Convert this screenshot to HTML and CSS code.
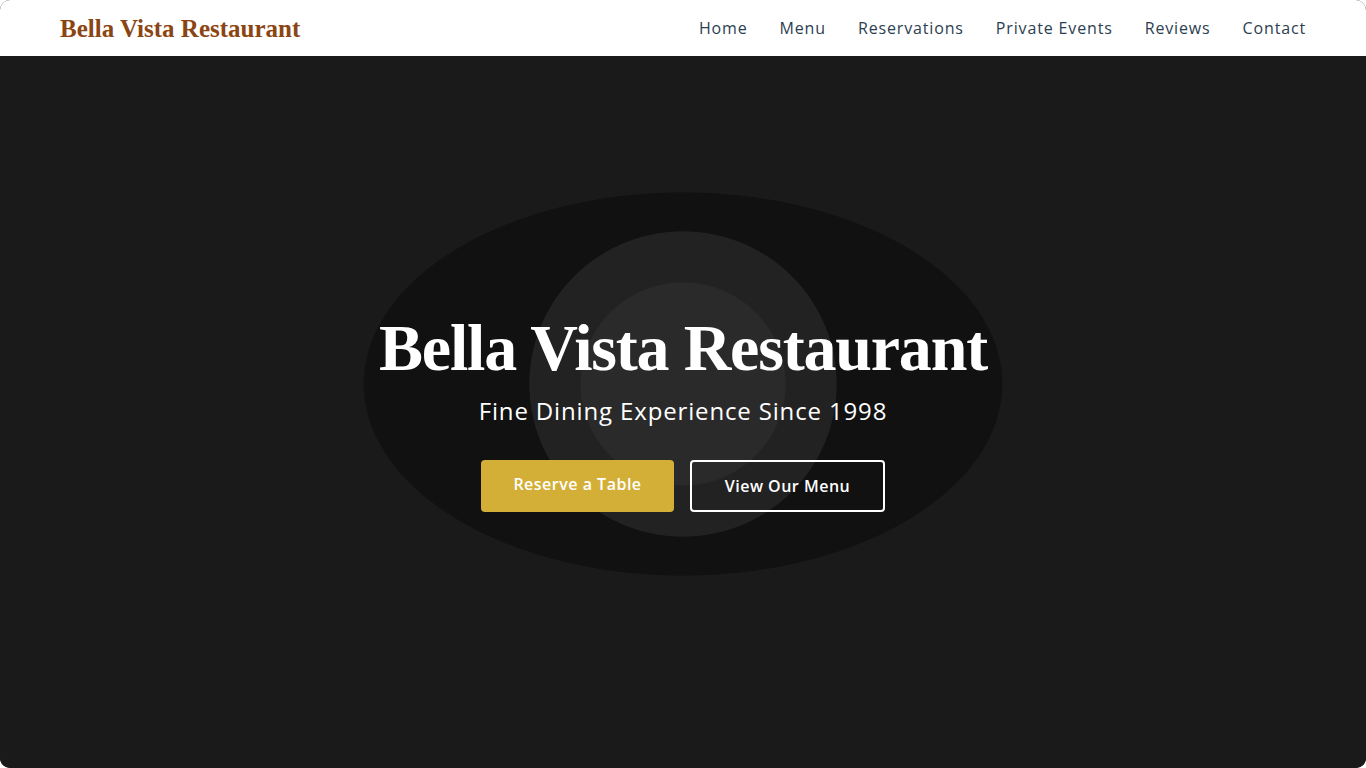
FILE: index.html
```html
<!DOCTYPE html>
<html lang="en">
<head>
<meta charset="utf-8">
<title>Bella Vista Restaurant</title>
<link rel="stylesheet" href="styles.css">
</head>
<body>
<div class="page">
  <header class="navbar">
    <a class="logo" href="#">Bella Vista Restaurant</a>
    <nav class="nav-links">
      <a href="#">Home</a>
      <a href="#">Menu</a>
      <a href="#">Reservations</a>
      <a href="#">Private Events</a>
      <a href="#">Reviews</a>
      <a href="#">Contact</a>
    </nav>
  </header>
  <section class="hero">
    <div class="hero-content">
      <h1 class="hero-title">Bella Vista Restaurant</h1>
      <p class="hero-subtitle">Fine Dining Experience Since 1998</p>
      <div class="hero-actions">
        <a class="btn btn-primary" href="#">Reserve a Table</a>
        <a class="btn btn-outline" href="#">View Our Menu</a>
      </div>
    </div>
  </section>
</div>
</body>
</html>
```
FILE: styles.css
```css
* { box-sizing: border-box; }
html, body { margin: 0; padding: 0; background: #ffffff; }
body { font-family: "Open Sans", "Noto Sans", sans-serif; }

.page {
  height: 768px;
  border-radius: 10px;
  overflow: hidden;
  background: #1a1a1a;
  display: flex;
  flex-direction: column;
}

.navbar {
  height: 56px;
  background: #ffffff;
  display: flex;
  align-items: center;
  justify-content: space-between;
  padding: 0 60px;
}

.logo {
  font-family: "Liberation Serif", "DejaVu Serif", serif;
  font-weight: 700;
  font-size: 25px;
  color: #8b4513;
  text-decoration: none;
  margin-top: 2px;
}

.nav-links {
  display: flex;
  gap: 32px;
}
.nav-links a {
  font-size: 16px;
  letter-spacing: 0.85px;
  color: #2c3e50;
  text-decoration: none;
}

.hero {
  flex: 1;
  display: flex;
  align-items: center;
  justify-content: center;
  background-color: #1a1a1a;
  background-image:
    radial-gradient(ellipse 103px 102px at 50% 328px, #2a2a2a 99%, transparent 100%),
    radial-gradient(ellipse 154px 153px at 50% 328px, #222222 99.5%, transparent 100%),
    radial-gradient(ellipse 320px 192px at 50% 328px, #111111 99.6%, transparent 100%);
}

.hero-content {
  text-align: center;
  color: #ffffff;
}

.hero-title {
  font-family: "Liberation Serif", "DejaVu Serif", serif;
  font-weight: 700;
  font-size: 66px;
  letter-spacing: -1.2px;
  line-height: 1.1;
  margin: 0 0 10px;
}

.hero-subtitle {
  font-size: 24px;
  font-weight: 400;
  letter-spacing: 0.85px;
  margin: 0 0 33px;
}

.hero-actions {
  display: flex;
  gap: 16px;
  justify-content: center;
}

.btn {
  display: inline-flex;
  align-items: center;
  justify-content: center;
  height: 52px;
  border-radius: 4px;
  font-size: 16px;
  font-weight: 600;
  letter-spacing: 0.5px;
  text-decoration: none;
  color: #ffffff;
}
.btn-primary {
  width: 193px;
  background: #d4af37;
  padding-bottom: 4px;
}
.btn-outline {
  width: 195px;
  border: 2px solid #ffffff;
  background: transparent;
}
```
